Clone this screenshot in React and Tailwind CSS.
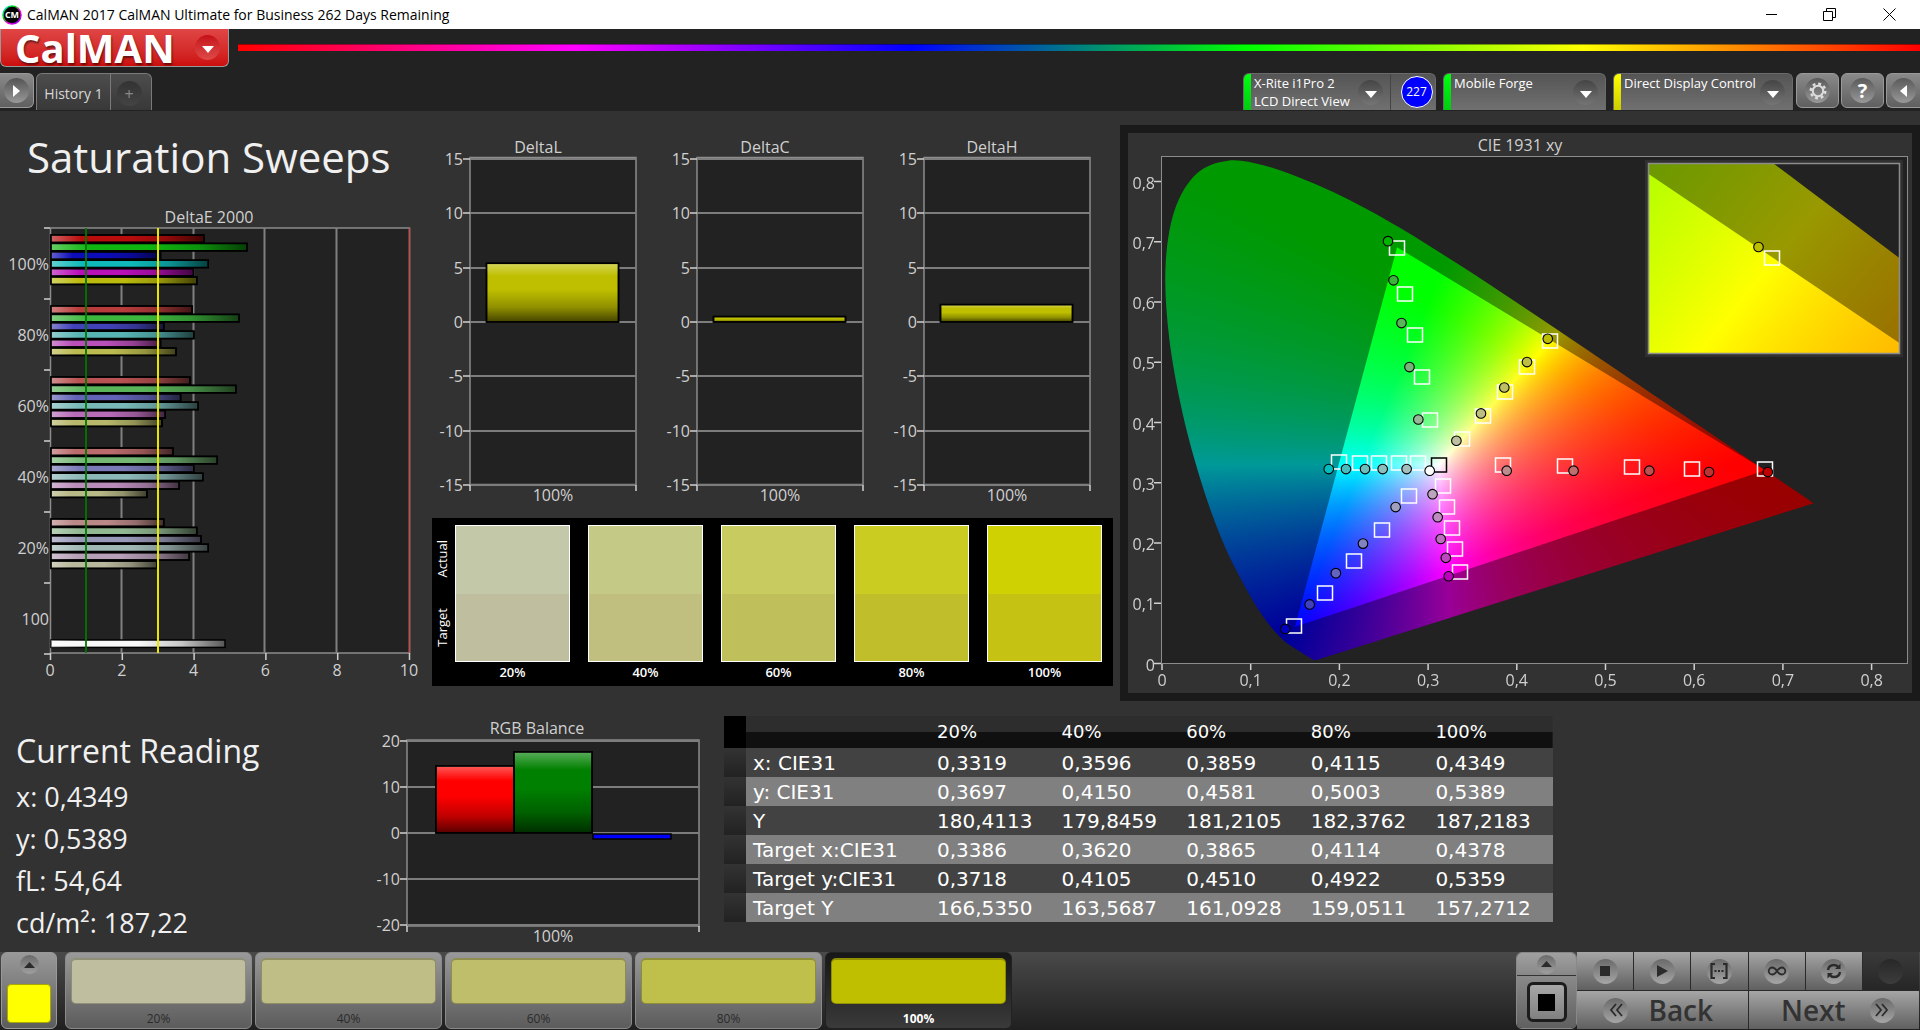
import { useEffect, useRef } from 'react';
import clsx from 'clsx';

const steps = ['20%', '40%', '60%', '80%', '100%'];

// DeltaE bars per saturation level, in drawing order: R, G, B, C, M, Y
const deltaE = [
  { label: '100%', colors: ['#b90c0c', '#0fb60f', '#0c0cb8', '#0fb9b9', '#b90fb9', '#bbbb0f'], values: [4.26, 5.46, 3.05, 4.38, 3.97, 4.06] },
  { label: '80%', colors: ['#b93c3c', '#3cb63c', '#4242b8', '#57b4b4', '#b950b9', '#bbbb50'], values: [3.93, 5.24, 3.14, 3.98, 3.05, 3.48] },
  { label: '60%', colors: ['#b95252', '#5ab45a', '#6262b6', '#78b8b8', '#b86cb8', '#b8b86c'], values: [3.87, 5.15, 3.61, 4.1, 3.18, 3.09] },
  { label: '40%', colors: ['#bb6b6b', '#74b874', '#7a7ab8', '#8cb8b8', '#b98cb9', '#b8b888'], values: [3.4, 4.63, 3.98, 4.23, 3.57, 2.67] },
  { label: '20%', colors: ['#bb8888', '#92b892', '#9898b8', '#a0b8b4', '#b8a0b8', '#b8b89c'], values: [3.14, 4.06, 4.18, 4.38, 3.85, 2.95] },
];

const swatches = [
  { label: '20%', actual: '#c3c8a8', target: '#bfbe9e' },
  { label: '40%', actual: '#c4c986', target: '#c0bf80' },
  { label: '60%', actual: '#c8cb60', target: '#bfbf5c' },
  { label: '80%', actual: '#cacc22', target: '#c0be2a' },
  { label: '100%', actual: '#d0d103', target: '#c5c214' },
];

const patterns = [
  { label: '20%', color: '#bfbfa0' },
  { label: '40%', color: '#bfbe86' },
  { label: '60%', color: '#bfbe6b' },
  { label: '80%', color: '#bfbf4c' },
  { label: '100%', color: '#bfbf00' },
];

const readings = [
  ['x: CIE31', '0,3319', '0,3596', '0,3859', '0,4115', '0,4349'],
  ['y: CIE31', '0,3697', '0,4150', '0,4581', '0,5003', '0,5389'],
  ['Y', '180,4113', '179,8459', '181,2105', '182,3762', '187,2183'],
  ['Target x:CIE31', '0,3386', '0,3620', '0,3865', '0,4114', '0,4378'],
  ['Target y:CIE31', '0,3718', '0,4105', '0,4510', '0,4922', '0,5359'],
  ['Target Y', '166,5350', '163,5687', '161,0928', '159,0511', '157,2712'],
];

// CIE 1931 spectral locus
const locus = [
  [0.1741, 0.005], [0.1714, 0.0051], [0.1644, 0.0109], [0.1566, 0.0177], [0.144, 0.0297], [0.1355, 0.0399],
  [0.1241, 0.0578], [0.1096, 0.0868], [0.0913, 0.1327], [0.0687, 0.2007], [0.0454, 0.295], [0.0235, 0.4127],
  [0.0082, 0.5384], [0.0039, 0.6548], [0.0139, 0.7502], [0.0389, 0.812], [0.0743, 0.8338], [0.1142, 0.8262],
  [0.1547, 0.8059], [0.1929, 0.7816], [0.2296, 0.7543], [0.2658, 0.7243], [0.3016, 0.6923], [0.3373, 0.6589],
  [0.3731, 0.6245], [0.4087, 0.5896], [0.4441, 0.5547], [0.4788, 0.5202], [0.5125, 0.4866], [0.5448, 0.4544],
  [0.5752, 0.4242], [0.6029, 0.3965], [0.627, 0.3725], [0.6482, 0.3514], [0.6658, 0.334], [0.6915, 0.3083],
  [0.719, 0.2809], [0.7347, 0.2653],
];

const primaries = [[0.68, 0.32], [0.265, 0.69], [0.15, 0.06]];

const targets = [
  [0.265, 0.69], [0.274, 0.613], [0.285, 0.546], [0.2935, 0.4757], [0.302, 0.404],
  [0.3386, 0.3718], [0.362, 0.4105], [0.3865, 0.451], [0.4114, 0.4922], [0.4378, 0.5359],
  [0.2, 0.3346], [0.223, 0.332], [0.2446, 0.332], [0.267, 0.332], [0.289, 0.332],
  [0.385, 0.33], [0.4543, 0.327], [0.5295, 0.3258], [0.5971, 0.323], [0.6794, 0.323],
  [0.279, 0.278], [0.2477, 0.222], [0.216, 0.1704], [0.184, 0.1174], [0.1484, 0.0624],
  [0.3164, 0.294], [0.3217, 0.26], [0.327, 0.2247], [0.33, 0.19], [0.3356, 0.1523],
];

const measured = [
  [0.2548, 0.701, '#00b400'], [0.261, 0.636, '#3cb43c'], [0.27, 0.565, '#5ab45a'], [0.279, 0.492, '#78b478'], [0.289, 0.405, '#96b896'],
  [0.188, 0.3227, '#00bebe'], [0.2074, 0.3227, '#46bebe'], [0.2289, 0.3227, '#6ebebe'], [0.2488, 0.3227, '#8cbebe'], [0.2758, 0.3227, '#a5bebe'],
  [0.3886, 0.32, '#be8c8c'], [0.464, 0.32, '#be6e6e'], [0.5494, 0.32, '#be5050'], [0.6167, 0.3177, '#be3232'], [0.683, 0.3177, '#be0000'],
  [0.2634, 0.2597, '#a0a0be'], [0.2266, 0.199, '#8282be'], [0.196, 0.15, '#6464be'], [0.1665, 0.098, '#4141be'], [0.139, 0.0574, '#0000be'],
  [0.305, 0.281, '#bea5be'], [0.3108, 0.2428, '#be8cbe'], [0.3142, 0.2066, '#be6ebe'], [0.32, 0.1754, '#be46be'], [0.3232, 0.1448, '#be00be'],
  [0.3319, 0.3697, '#bebea0'], [0.3596, 0.415, '#bebe82'], [0.3859, 0.4581, '#bebe64'], [0.4115, 0.5003, '#bebe41'], [0.4349, 0.5389, '#bebe00'],
  [0.3018, 0.32, '#ffffff'],
];

function chromaColor(x, y) {
  const X = x / y;
  const Z = (1 - x - y) / y;
  const rgb = [
    3.2406 * X - 1.5372 - 0.4986 * Z,
    -0.9689 * X + 1.8758 + 0.0415 * Z,
    0.0557 * X - 0.204 + 1.057 * Z,
  ].map((v) => Math.max(0, v));
  const max = Math.max(...rgb);
  return rgb.map((v) => (v / max) * 255);
}

// Catmull-Rom through the locus points, closed by the line of purples
function smoothPath(points) {
  let d = `M${points[0][0]} ${points[0][1]}`;
  for (let i = 0; i < points.length - 1; i++) {
    const p0 = points[i - 1] || points[i];
    const [p1, p2] = [points[i], points[i + 1]];
    const p3 = points[i + 2] || p2;
    d += `C${p1[0] + (p2[0] - p0[0]) / 6} ${p1[1] + (p2[1] - p0[1]) / 6} ${p2[0] - (p3[0] - p1[0]) / 6} ${p2[1] - (p3[1] - p1[1]) / 6} ${p2[0]} ${p2[1]}`;
  }
  return d + 'Z';
}

function ChromaField({ width, height, x0, y0, xSpan, ySpan }) {
  const ref = useRef(null);

  useEffect(() => {
    const ctx = ref.current.getContext('2d');
    const img = ctx.createImageData(width, height);
    for (let j = 0; j < height; j++) {
      const y = Math.max(0.001, y0 + ySpan * (1 - (j + 0.5) / height));
      for (let i = 0; i < width; i++) {
        const [r, g, b] = chromaColor(x0 + (xSpan * (i + 0.5)) / width, y);
        img.data.set([r, g, b, 255], (j * width + i) * 4);
      }
    }
    ctx.putImageData(img, 0, 0);
  }, [width, height, x0, y0, xSpan, ySpan]);

  return <canvas ref={ref} width={width} height={height} className="block" />;
}

function Gamut({ left, top, width, height, x0, y0, xSpan, ySpan }) {
  const px = ([x, y]) => [((x - x0) / xSpan) * width, height - ((y - y0) / ySpan) * height];
  const frame = `M-5 -5H${width + 5}V${height + 5}H-5Z`;
  const shape = smoothPath(locus.map(px));
  const triangle = `M${primaries.map((p) => px(p).join(' ')).join('L')}Z`;

  return (
    <svg x={left} y={top} width={width} height={height}>
      <foreignObject x="0" y="0" width={width} height={height}>
        <ChromaField width={width} height={height} x0={x0} y0={y0} xSpan={xSpan} ySpan={ySpan} />
      </foreignObject>
      <path d={frame + triangle} fillRule="evenodd" fill="#000" fillOpacity="0.4" />
      <path d={frame + shape} fillRule="evenodd" fill="#222" />
    </svg>
  );
}

function Target({ cx, cy, stroke = '#fff' }) {
  return <rect x={Math.round(cx) - 7.5} y={Math.round(cy) - 7} width="15" height="14" fill="none" stroke={stroke} strokeWidth="1.5" />;
}

function Measured({ cx, cy, fill }) {
  return <circle cx={cx} cy={cy} r="4.8" fill={fill} stroke="#000" strokeWidth="1.1" />;
}

function CieChart() {
  const sx = (x) => 34 + x * 887;
  const sy = (y) => 530.5 - y * 602.5;
  const ticks = [0, 1, 2, 3, 4, 5, 6, 7, 8];
  const label = (t) => (t === 0 ? '0' : `0,${t}`);

  return (
    <svg viewBox="0 0 784 560" className="block w-full">
      <text x="392" y="18" textAnchor="middle" className="fill-[#d0d0d0] text-[16px]">CIE 1931 xy</text>
      <Gamut left={34} top={24} width={745} height={506} x0={0} y0={0} xSpan={745 / 887} ySpan={506 / 602.5} />
      <rect x="33.5" y="23.5" width="746" height="507" fill="none" stroke="#8c8c8c" />
      {ticks.map((t) => (
        <g key={t}>
          <path d={`M26 ${sy(t / 10)}h7M${sx(t / 10)} 531v6`} stroke="#d0d0d0" strokeWidth="1.5" />
          <text x="27" y={sy(t / 10) + 7} textAnchor="end" className="fill-[#d0d0d0] text-[16px]">{label(t)}</text>
          <text x={sx(t / 10)} y="553" textAnchor="middle" className="fill-[#d0d0d0] text-[16px]">{label(t)}</text>
        </g>
      ))}
      {targets.map(([x, y]) => <Target key={`${x}-${y}`} cx={sx(x)} cy={sy(y)} />)}
      <Target cx={sx(0.3127)} cy={sy(0.33)} stroke="#000" />
      {measured.map(([x, y, fill]) => <Measured key={`${x}-${y}`} cx={sx(x)} cy={sy(y)} fill={fill} />)}

      {/* magnified view around the selected target */}
      <rect x="517" y="27" width="258" height="197" fill="#303030" />
      <Gamut left={521} top={31} width={250} height={189} x0={0.4126} y0={0.5111} xSpan={0.05} ySpan={0.05} />
      <rect x="520.5" y="30.5" width="251" height="190" fill="none" stroke="#8c8c8c" strokeWidth="1.5" />
      <Measured cx={630.5} cy={114} fill="#bebe00" />
      <Target cx={644} cy={125} />
    </svg>
  );
}

function DeltaEChart() {
  const unit = 35.9;
  return (
    <svg viewBox="0 0 432 490" className="block w-full">
      <defs>
        <linearGradient id="shadeX">
          <stop offset="0" stopColor="#fff" stopOpacity="0.35" />
          <stop offset="0.2" stopColor="#fff" stopOpacity="0" />
          <stop offset="0.5" stopColor="#000" stopOpacity="0" />
          <stop offset="0.75" stopColor="#000" stopOpacity="0.2" />
          <stop offset="1" stopColor="#000" stopOpacity="0.65" />
        </linearGradient>
      </defs>
      <text x="209" y="20" textAnchor="middle" className="fill-[#d0d0d0] text-[16px]">DeltaE 2000</text>
      <rect x="50.5" y="25" width="359" height="425" fill="#222" stroke="#8c8c8c" strokeWidth="1.5" />
      {[2, 4, 6, 8].map((v) => (
        <path key={v} d={`M${Math.round(50 + v * unit) - 0.5} 25v425`} stroke="#808080" strokeWidth="2" />
      ))}
      {[0, 2, 4, 6, 8, 10].map((v) => (
        <g key={v}>
          <path d={`M${50.5 + v * unit} 450v7`} stroke="#d0d0d0" strokeWidth="1.5" />
          <text x={50 + v * unit} y="473" textAnchor="middle" className="fill-[#d0d0d0] text-[16px]">{v}</text>
        </g>
      ))}
      {[0, 1, 2, 3, 4, 5, 6].map((i) => (
        <path key={i} d={`M44 ${25 + i * 71}h6`} stroke="#d0d0d0" strokeWidth="1.5" />
      ))}
      {deltaE.map((group, g) => (
        <g key={group.label}>
          <text x="49" y={67 + g * 71} textAnchor="end" className="fill-[#d0d0d0] text-[16px]">{group.label}</text>
          {group.values.map((value, i) => (
            <g key={i} stroke="#000" strokeWidth="1.5">
              <rect x="51" y={32 + g * 71 + i * 8.4} width={value * unit} height="7.4" fill={group.colors[i]} />
              <rect x="51" y={32 + g * 71 + i * 8.4} width={value * unit} height="7.4" fill="url(#shadeX)" />
            </g>
          ))}
        </g>
      ))}
      <text x="49" y="422" textAnchor="end" className="fill-[#d0d0d0] text-[16px]">100</text>
      <rect x="51" y="437" width="174" height="7.4" fill="#f8f8f8" stroke="#000" strokeWidth="1.5" />
      <rect x="51" y="437" width="174" height="7.4" fill="url(#shadeX)" />
      <path d="M86 25v425" stroke="#007800" strokeOpacity="0.9" strokeWidth="2" />
      <path d="M158 25v425" stroke="#e6e600" strokeWidth="2" />
      <path d="M409.5 25v425" stroke="#c05050" strokeWidth="1.5" />
    </svg>
  );
}

function ShadeY() {
  return (
    <defs>
      <linearGradient id="shadeY" x2="0" y2="1">
        <stop offset="0" stopColor="#fff" stopOpacity="0.35" />
        <stop offset="0.22" stopColor="#fff" stopOpacity="0" />
        <stop offset="0.45" stopColor="#000" stopOpacity="0" />
        <stop offset="0.75" stopColor="#000" stopOpacity="0.25" />
        <stop offset="1" stopColor="#000" stopOpacity="0.65" />
      </linearGradient>
    </defs>
  );
}

function DeltaChart({ title, value }) {
  const sy = (v) => 192 - v * 10.87;
  return (
    <svg viewBox="0 0 227 388" className="block w-full overflow-visible">
      <ShadeY />
      <text x="106" y="23" textAnchor="middle" className="fill-[#d0d0d0] text-[16px]">{title}</text>
      <rect x="38" y="27.5" width="166" height="327" fill="#222" stroke="#8c8c8c" strokeWidth="1.5" />
      {[15, 10, 5, 0, -5, -10, -15].map((v) => (
        <g key={v}>
          <path d={`M38 ${Math.round(sy(v))}h166`} stroke="#7d7d7d" strokeWidth="2" />
          <path d={`M31 ${Math.round(sy(v))}h7`} stroke="#d0d0d0" strokeWidth="1.5" />
          <text x="31" y={Math.round(sy(v)) + 6} textAnchor="end" className="fill-[#d0d0d0] text-[16px]">{v}</text>
        </g>
      ))}
      <path d="M38 355v6M204 355v6" stroke="#d0d0d0" strokeWidth="1.5" />
      <g stroke="#000" strokeWidth="1.5">
        <rect x="54.5" y={sy(value)} width="132" height={192 - sy(value)} fill="#bfbf00" />
        <rect x="54.5" y={sy(value)} width="132" height={192 - sy(value)} fill="url(#shadeY)" />
      </g>
      <text x="121" y="371" textAnchor="middle" className="fill-[#d0d0d0] text-[16px]">100%</text>
    </svg>
  );
}

function RgbBalance() {
  const bars = [
    { x: 66, y: 50, height: 67, fill: '#ff0000' },
    { x: 144, y: 36, height: 81, fill: '#008000' },
    { x: 223, y: 118, height: 5, fill: '#0000ff' },
  ];
  return (
    <svg viewBox="0 0 354 236" className="block w-full overflow-visible">
      <text x="167" y="18" textAnchor="middle" className="fill-[#d0d0d0] text-[16px]">RGB Balance</text>
      <rect x="37" y="24" width="292" height="186" fill="#222" stroke="#8c8c8c" strokeWidth="1.5" />
      {[20, 10, 0, -10, -20].map((v, i) => (
        <g key={v}>
          <path d={`M37 ${25 + i * 46}h292`} stroke="#7d7d7d" strokeWidth="2" />
          <path d={`M30 ${25 + i * 46}h7`} stroke="#d0d0d0" strokeWidth="1.5" />
          <text x="30" y={31 + i * 46} textAnchor="end" className="fill-[#d0d0d0] text-[16px]">{v}</text>
        </g>
      ))}
      <path d="M37 210v6M329 210v6" stroke="#d0d0d0" strokeWidth="1.5" />
      {bars.map((bar) => (
        <g key={bar.fill} stroke="#000" strokeWidth="1.5">
          <rect x={bar.x} y={bar.y} width="78" height={bar.height} fill={bar.fill} />
          {bar.height > 10 && <rect x={bar.x} y={bar.y} width="78" height={bar.height} fill="url(#shadeY)" />}
        </g>
      ))}
      <text x="183" y="226" textAnchor="middle" className="fill-[#d0d0d0] text-[16px]">100%</text>
    </svg>
  );
}

function ColorChecker() {
  return (
    <div className="flex gap-[5px] bg-black pt-[7px] pr-[3px] pb-1 pl-[2px] text-white">
      <div className="flex h-[137px] w-4 flex-col-reverse justify-around text-[13px] leading-4">
        <span className="rotate-180 self-center [writing-mode:vertical-rl]">Target</span>
        <span className="rotate-180 self-center [writing-mode:vertical-rl]">Actual</span>
      </div>
      <div className="grid flex-1 grid-cols-5 gap-[18px] pr-2">
        {swatches.map((s) => (
          <div key={s.label}>
            <div className="flex h-[137px] flex-col border border-white">
              <div className="flex-1" style={{ background: s.actual }} />
              <div className="flex-1" style={{ background: s.target }} />
            </div>
            <p className="text-center text-[13px] leading-5 font-semibold">{s.label}</p>
          </div>
        ))}
      </div>
    </div>
  );
}

function TitleBar() {
  return (
    <header className="flex h-[29px] items-center bg-white text-black">
      <svg viewBox="0 0 20 20" className="ml-[2px] size-5">
        <defs>
          <linearGradient id="ring" x2="1" y2="1">
            <stop offset="0" stopColor="#00e5ff" />
            <stop offset="0.35" stopColor="#00d000" />
            <stop offset="0.6" stopColor="#ff00e0" />
            <stop offset="1" stopColor="#7a00ff" />
          </linearGradient>
        </defs>
        <circle cx="10" cy="10" r="9" fill="#000" stroke="url(#ring)" strokeWidth="1.5" />
        <text x="10" y="13" textAnchor="middle" className="fill-white text-[9px] font-bold">CM</text>
      </svg>
      <span className="ml-[5px] flex-1 text-[14px]">CalMAN 2017 CalMAN Ultimate for Business 262 Days Remaining</span>
      <button aria-label="Minimize" className="flex w-[58px] justify-center">
        <svg viewBox="0 0 13 13" className="size-[13px]"><path d="M1 6.5h11" stroke="#000" /></svg>
      </button>
      <button aria-label="Restore" className="flex w-[58px] justify-center">
        <svg viewBox="0 0 13 13" className="size-[13px]"><path d="M.5 3.5h9v9h-9zM3.5 3.5v-3h9v9h-3" fill="none" stroke="#000" /></svg>
      </button>
      <button aria-label="Close" className="flex w-[62px] justify-center">
        <svg viewBox="0 0 13 13" className="size-[13px]"><path d="M.5 .5l12 12M12.5 .5l-12 12" stroke="#000" /></svg>
      </button>
    </header>
  );
}

function Knob({ className, children }) {
  return (
    <span className={clsx('flex size-[25px] shrink-0 items-center justify-center rounded-full bg-linear-to-b', className || 'from-[#454545] to-[#757575]')}>
      {children}
    </span>
  );
}

function DownArrow() {
  return <svg viewBox="0 0 12 8" className="mt-1 h-2 w-3"><path d="M0 0h12L6 7z" fill="#fff" /></svg>;
}

function DeviceTab({ width, status, lines, children }) {
  return (
    <div className={clsx('flex h-[37px] overflow-hidden rounded-t-md border border-b-0 border-[#6a6a6a] bg-linear-to-b from-[#555] to-[#707070]', width)}>
      <span className={clsx('w-[7px] shrink-0 bg-linear-to-b', status)} />
      <button className="flex flex-1 items-start justify-between pr-[7px] pl-[3px] text-left text-[13px] leading-[18px] whitespace-nowrap text-white">
        <span>{lines.map((l) => <span key={l} className="block">{l}</span>)}</span>
        <span className="pt-[6px]"><Knob><DownArrow /></Knob></span>
      </button>
      {children}
    </div>
  );
}

const squareButton = 'flex h-[35px] items-center justify-center border border-[#999] bg-linear-to-b from-[#8a8a8a] to-[#606060]';

function TopBar() {
  return (
    <div className="bg-[#222]">
      <div className="flex items-start">
        <button className="flex h-[38px] w-[229px] items-center justify-between rounded-b-md border border-t-0 border-[#999] bg-linear-to-b from-[#e04545] to-[#cc0c0c] pr-2 pl-[14px]">
          <span className="text-[40px] leading-[34px] font-bold text-white [text-shadow:1px_2px_2px_rgba(0,0,0,0.5)]">CalMAN</span>
          <Knob className="from-[#c40c18] to-[#e04848]"><DownArrow /></Knob>
        </button>
        <div className="mt-[15px] ml-[9px] h-[7px] flex-1 border-t border-black/40 bg-[linear-gradient(90deg,#f00,#f0f_20%,#00f_40%,#0f0_60%,#ff0_80%,#f00)]" />
      </div>
      <div className="flex items-start justify-between pt-[6px]">
        <div className="flex">
          <button aria-label="Expand" className={clsx(squareButton, 'w-[34px] rounded-r-md border-l-0')}>
            <Knob className="from-[#555] to-[#999]">
              <svg viewBox="0 0 8 12" className="h-3 w-2"><path d="M0 0l7 6-7 6z" fill="#fff" /></svg>
            </Knob>
          </button>
          <div className="ml-[2px] flex h-[37px] rounded-t-md border border-b-0 border-[#7a7a7a] bg-linear-to-b from-[#4d4d4d] to-[#383838]">
            <button className="w-[73px] pt-[2px] text-[14px] text-[#d8d8d8]">History 1</button>
            <button className="flex w-[41px] items-end justify-center border-l border-[#7a7a7a] pr-1 pb-1 text-[16px] text-[#888]">
              <Knob className="from-[#333] to-[#444]">+</Knob>
            </button>
          </div>
        </div>
        <div className="flex">
          <DeviceTab width="w-[193px]" status="from-[#00ff10] to-[#00cc10]" lines={['X-Rite i1Pro 2', 'LCD Direct View']}>
            <div className="flex w-[45px] items-center justify-center border-l border-[#444] pl-[7px]">
              <span className="flex size-8 items-center justify-center rounded-full border border-white bg-[#0000ff] text-[12px] text-white">227</span>
            </div>
          </DeviceTab>
          <div className="w-[7px]" />
          <DeviceTab width="w-[163px]" status="from-[#00ff10] to-[#00cc10]" lines={['Mobile Forge']} />
          <div className="w-[7px]" />
          <DeviceTab width="w-[180px]" status="from-[#ffff00] to-[#cccc00]" lines={['Direct Display Control']} />
          <button aria-label="Settings" className={clsx(squareButton, 'ml-[3px] w-[43px] rounded-md')}>
            <Knob className="from-[#5a5a5a] to-[#999]">
              <svg viewBox="0 0 20 20" className="size-5">
                <circle cx="10" cy="10" r="5.2" fill="none" stroke="#ddd" strokeWidth="2" />
                <circle cx="10" cy="10" r="7.3" fill="none" stroke="#ddd" strokeWidth="2.4" strokeDasharray="2.9 2.83" />
              </svg>
            </Knob>
          </button>
          <button aria-label="Help" className={clsx(squareButton, 'ml-[2px] w-[43px] rounded-md text-[20px] font-bold text-white')}>
            <Knob className="from-[#5a5a5a] to-[#999]">?</Knob>
          </button>
          <button aria-label="Collapse" className={clsx(squareButton, 'ml-[2px] w-[34px] rounded-l-md border-r-0')}>
            <Knob className="from-[#5a5a5a] to-[#999]">
              <svg viewBox="0 0 8 12" className="h-3 w-2"><path d="M7 0L0 6l7 6z" fill="#fff" /></svg>
            </Knob>
          </button>
        </div>
      </div>
    </div>
  );
}

function ReadingsTable() {
  return (
    <table className="w-full table-fixed border-collapse text-left font-['DejaVu_Sans',sans-serif] text-[20px] text-white">
      <colgroup>
        <col className="w-[22px]" />
        <col className="w-[184px]" />
        {steps.map((s) => <col key={s} />)}
      </colgroup>
      <thead>
        <tr className="h-8 bg-[linear-gradient(#2d2d2d_50%,#101010_50%)]">
          <th className="bg-black" />
          <th />
          {steps.map((s) => <th key={s} className="p-0 pl-[7px] text-[18px] leading-6 font-normal">{s}</th>)}
        </tr>
      </thead>
      <tbody>
        {readings.map(([name, ...values], i) => (
          <tr key={name} className={clsx('h-[29px]', i % 2 ? 'bg-[#808080]' : 'bg-[#424242]')}>
            <td className="bg-linear-to-b from-[#333] to-[#222]" />
            <th scope="row" className="p-0 pl-[7px] leading-6 font-normal whitespace-nowrap">{name}</th>
            {values.map((v, j) => <td key={j} className="p-0 pl-[7px] leading-6">{v}</td>)}
          </tr>
        ))}
      </tbody>
    </table>
  );
}

const icons = {
  stop: <rect x="5" y="5" width="10" height="10" fill="#2b2b2b" />,
  play: <path d="M5 4l11 6-11 6z" fill="#2b2b2b" />,
  range: <path d="M6 3H2.500v14H6M14 3h3.500v14H14M5.500 10h2M9 10h2M12.500 10h2" fill="none" stroke="#2b2b2b" strokeWidth="2.200" />,
  loop: <path d="M10 10C8 7 7 6.500 5.200 6.500a3.500 3.500 0 0 0 0 7C7 13.500 8 13 10 10s3-3.500 4.800-3.500a3.500 3.500 0 0 1 0 7C13 13.500 12 13 10 10z" fill="none" stroke="#2b2b2b" strokeWidth="1.800" />,
  refresh: (
    <g fill="none" stroke="#2b2b2b" strokeWidth="2.400">
      <path d="M4 9c.5-3.500 3-5 6-5 2 0 3.500.8 4.500 2.200M16 11c-.5 3.500-3 5-6 5-2 0-3.500-.8-4.500-2.200" />
      <path d="M16.500 2.500v5.500h-5.500zM3.500 17.500V12H9z" fill="#2b2b2b" stroke="none" />
    </g>
  ),
};

const navButton = 'flex h-[38px] items-center justify-center bg-linear-to-b from-[#a6a6a6] to-[#606060]';

function UpKnob() {
  return (
    <span className="flex size-[19px] items-center justify-center rounded-full bg-linear-to-b from-[#6a6a6a] to-[#a0a0a0]">
      <svg viewBox="0 0 11 6" className="h-[6px] w-[11px]"><path d="M0 6L5.500 0 11 6z" fill="#2b2b2b" /></svg>
    </span>
  );
}

function BottomBar() {
  return (
    <footer className="flex h-[78px] items-start bg-linear-to-b from-[#4a4a4a] to-[#202020] pr-px">
      <button aria-label="Current pattern" className="ml-px flex h-[77px] w-14 flex-col items-center justify-between rounded-md border border-[#999] bg-linear-to-b from-[#999] to-[#5c5c5c] pt-[2px] pb-[5px]">
        <UpKnob />
        <span className="h-[39px] w-11 rounded border border-[#a8a800] bg-[#ffff00]" />
      </button>
      <div className="ml-2 flex gap-[3px]">
        {patterns.map((p) => {
          const active = p.label === '100%';
          return (
            <button
              key={p.label}
              className={clsx(
                'flex h-[77px] w-[187px] flex-col items-center rounded-md border bg-linear-to-b pt-[5px] text-[12px]',
                active ? 'border-[#222] from-[#181818] to-[#3a3a3a] font-bold text-white' : 'border-[#8a8a8a] from-[#999] to-[#5c5c5c] text-[#2b2b2b]',
              )}
            >
              <span className="h-[46px] w-[175px] rounded-[5px] border border-t-2 border-black/25 bg-clip-border" style={{ backgroundColor: p.color }} />
              <span className="mt-[7px] leading-4">{p.label}</span>
            </button>
          );
        })}
      </div>
      <div className="flex-1" />
      <div className="flex h-[77px] w-[61px] flex-col overflow-hidden rounded-md border border-[#888]">
        <button aria-label="Show controls" className="flex h-[23px] items-center justify-center border-b border-[#333] bg-linear-to-b from-[#a0a0a0] to-[#888]"><UpKnob /></button>
        <button aria-label="Abort" className="flex flex-1 items-center justify-center bg-linear-to-b from-[#8a8a8a] to-[#606060]">
          <span className="flex size-10 items-center justify-center rounded-md border-3 border-[#1c1c1c] bg-linear-to-b from-[#a8a8a8] to-[#808080]">
            <span className="size-[17px] bg-black" />
          </span>
        </button>
      </div>
      <div className="grid w-[342px] grid-cols-6 gap-px bg-[#2a2a2a]">
        {Object.keys(icons).map((name) => (
          <button key={name} aria-label={name} className={navButton}>
            <Knob className="from-[#6a6a6a] to-[#a6a6a6]"><svg viewBox="0 0 20 20" className="size-[20px]">{icons[name]}</svg></Knob>
          </button>
        ))}
        <span className="flex h-[38px] items-center justify-center bg-linear-to-b from-[#3a3a3a] to-[#262626]">
          <Knob className="from-[#282828] to-[#3c3c3c]" />
        </span>
        <button className={clsx(navButton, 'col-span-3 gap-5 pr-2 text-[28px] leading-9 font-semibold text-[#333]')}>
          <Knob className="from-[#6a6a6a] to-[#a6a6a6]">
            <svg viewBox="0 0 16 16" className="size-4"><path d="M8 2L3 8l5 6M14 2L9 8l5 6" fill="none" stroke="#2b2b2b" strokeWidth="1.800" /></svg>
          </Knob>
          Back
        </button>
        <button className={clsx(navButton, 'col-span-3 gap-6 pl-2 text-[28px] leading-9 font-semibold text-[#333]')}>
          Next
          <Knob className="from-[#6a6a6a] to-[#a6a6a6]">
            <svg viewBox="0 0 16 16" className="size-4"><path d="M2 2l5 6-5 6M8 2l5 6-5 6" fill="none" stroke="#2b2b2b" strokeWidth="1.800" /></svg>
          </Knob>
        </button>
      </div>
    </footer>
  );
}

export default function App() {
  return (
    <div className="flex min-h-screen flex-col bg-[#323232] font-['Open_Sans','Noto_Sans',sans-serif]">
      <TitleBar />
      <TopBar />
      <main className="flex-1 border-t border-[#222] text-[#f0f0f0]">
        <div className="grid grid-cols-[432fr_681fr_807fr] items-start">
          <section>
            <h1 className="pt-5 pb-5 pl-[27px] text-[42px] leading-[52px]">Saturation Sweeps</h1>
            <DeltaEChart />
          </section>
          <section className="pt-[19px]">
            <div className="grid grid-cols-3">
              <DeltaChart title="DeltaL" value={5.4} />
              <DeltaChart title="DeltaC" value={0.5} />
              <DeltaChart title="DeltaH" value={1.6} />
            </div>
            <ColorChecker />
          </section>
          <section className="mt-[14px] ml-[7px] border-8 border-[#1a1a1a]">
            <CieChart />
          </section>
        </div>
        <div className="grid grid-cols-[370fr_354fr_829fr_367fr] items-start pt-[15px]">
          <section className="pt-[10px] pl-4 text-[27px] leading-[42px]">
            <h2 className="text-[32px] leading-[50px]">Current Reading</h2>
            <p>x: 0,4349</p>
            <p>y: 0,5389</p>
            <p>fL: 54,64</p>
            <p>cd/m²: 187,22</p>
          </section>
          <RgbBalance />
          <ReadingsTable />
        </div>
      </main>
      <BottomBar />
    </div>
  );
}
